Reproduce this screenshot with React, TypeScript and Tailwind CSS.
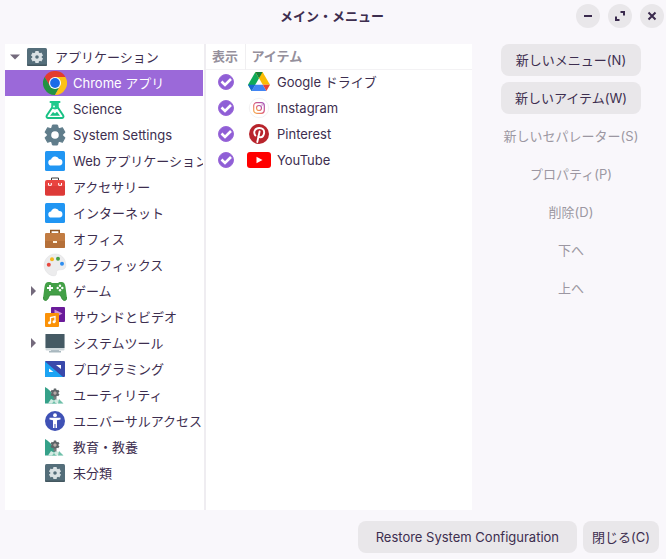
import * as React from "react";
import clsx from "clsx";

const svgProps = {
  width: 24,
  height: 24,
  viewBox: "0 0 24 24",
  className: "shrink-0",
  "aria-hidden": true,
} as const;

const GEAR_TEETH = [0, 60, 120, 180, 240, 300];

const BoxGearIcon = () => (
  <svg {...svgProps}>
    <rect x="2" y="3" width="20" height="18" rx="1.5" fill="#546e7a" />
    <path d="M2 19.500h20a1.500 1.500 0 0 1-1.500 1.500h-17A1.500 1.500 0 0 1 2 19.500z" fill="#43575f" />
    {GEAR_TEETH.map((angle) => (
      <rect
        key={angle}
        x="10.200"
        y="6"
        width="3.600"
        height="3.500"
        rx=".4"
        fill="#d9e1e4"
        transform={`rotate(${angle} 12 12)`}
      />
    ))}
    <circle cx="12" cy="12" r="3.300" fill="none" stroke="#d9e1e4" strokeWidth="3" />
  </svg>
);

const ChromeIcon = () => (
  <svg {...svgProps}>
    <path d="M12 6.500h10.700A12 12 0 0 0 1.600 6l5.300 9z" fill="#e33b2e" />
    <path d="M1.600 6A12 12 0 0 0 12 24l5-9-10 0z" fill="#229342" />
    <path d="M12 24A12 12 0 0 0 22.400 6H12l5 9z" fill="#fbc116" />
    <circle cx="12" cy="12" r="6" fill="#fff" />
    <circle cx="12" cy="12" r="4.900" fill="#1a6be8" />
  </svg>
);

const ScienceIcon = () => (
  <svg {...svgProps}>
    <path
      d="M9.500 6v4L3.800 18.500a1.700 1.700 0 0 0 1.500 2.600h13.400a1.700 1.700 0 0 0 1.500-2.600L14.500 10V6"
      fill="#fff"
      stroke="#18c184"
      strokeWidth="2"
      strokeLinejoin="round"
    />
    <path d="M7.500 5h9" stroke="#1fc98b" strokeWidth="2" strokeLinecap="round" />
    <path d="M8.500 5h7v6.500L12 12.500l-3.500-1z" fill="#22ca8d" />
    <path d="m7 18.800 3-3.800 2 1.500 2-1.800 3 4.100z" fill="#18c184" />
    <circle cx="11" cy="9.500" r=".9" fill="#fff" />
  </svg>
);

const SettingsIcon = () => (
  <svg {...svgProps}>
    {GEAR_TEETH.map((angle) => (
      <path
        key={angle}
        d="M9.500 2h5l1.300 5h-7.600z"
        fill="#607d8b"
        stroke="#607d8b"
        strokeLinejoin="round"
        transform={`rotate(${angle} 12 12)`}
      />
    ))}
    <circle cx="12" cy="12" r="7.500" fill="#607d8b" />
    <circle cx="12" cy="12" r="3.800" fill="#fff" />
  </svg>
);

const CloudIcon = () => (
  <svg {...svgProps}>
    <rect x="2" y="2" width="20" height="20" rx="1.500" fill="#2196f3" />
    <path d="M8.500 16.500a3 3 0 0 1-.4-6 4.200 4.200 0 0 1 7.900-.6 3.300 3.300 0 0 1 .3 6.600z" fill="#fff" />
  </svg>
);

const ToolboxIcon = () => (
  <svg {...svgProps}>
    <path d="M8.500 6V3h7v3" fill="none" stroke="#3c3c3c" strokeWidth="1" />
    <rect x="2" y="5" width="20" height="15.500" rx="2" fill="#e94440" />
    <path d="M2 11h20v8a1.500 1.500 0 0 1-1.500 1.500h-17A1.500 1.500 0 0 1 2 19z" fill="#dd3a38" />
    <path d="M5.500 8v2.300h2.800V8M15.700 8v2.300h2.800V8" fill="none" stroke="#fff" strokeWidth="1" />
  </svg>
);

const BriefcaseIcon = () => (
  <svg {...svgProps}>
    <path d="M7.800 7V3.500h8.400V7" fill="none" stroke="#8d5524" strokeWidth="1.600" />
    <rect x="2" y="6" width="20" height="15" rx="1.200" fill="#c27c42" />
    <path d="M2 14h20v5.800a1.200 1.200 0 0 1-1.200 1.200H3.200A1.200 1.200 0 0 1 2 19.800z" fill="#b57039" />
    <path d="M10 14h4v2h-4z" fill="#fff3df" />
  </svg>
);

const PaletteIcon = () => (
  <svg {...svgProps}>
    <path
      d="M12.500 1C6 1 1.200 6 1.200 12.200c0 6 4.600 10.600 9.800 10.600 3.500 0 1.800-3.300 3-5 1.600-2.200 8.800.8 8.800-5.500C22.800 5.500 18 1 12.500 1z"
      fill="#ececed"
      stroke="#dcdcde"
      strokeWidth=".5"
    />
    <circle cx="5.800" cy="11.800" r="2" fill="#e8483f" />
    <circle cx="9" cy="6.300" r="2" fill="#f3b51d" />
    <circle cx="15" cy="5.700" r="2" fill="#43a047" />
    <circle cx="19" cy="10.800" r="2" fill="#2e8ef0" />
  </svg>
);

const GamepadIcon = () => (
  <svg {...svgProps}>
    <path
      d="M5 3h2.500l1.500 1h6l1.500-1H19c2.300.3 3 2.300 3.500 5l1.300 10c.3 3-1.500 4-3.300 3.200-1.800-.8-2.200-4-3.500-5.200H7c-1.300 1.200-1.700 4.400-3.500 5.200C1.700 22 0 21 .2 18L1.500 8C2 5.300 2.700 3.300 5 3z"
      fill="#43a047"
    />
    <path d="M.5 18c-.2 3 1.300 4 3 3.200C5.300 20.400 5.700 17.200 7 16h10c1.300 1.200 1.700 4.400 3.500 5.200 1.700.8 3.200-.2 3-3.200" fill="none" stroke="#388e3c" />
    <path d="M7 6v6M4 9h6" stroke="#fff" strokeWidth="1.800" />
    <circle cx="17" cy="6.700" r="1.200" fill="#fff" />
    <circle cx="17" cy="11.300" r="1.200" fill="#fff" />
    <circle cx="14.700" cy="9" r="1.200" fill="#fff" />
    <circle cx="19.300" cy="9" r="1.200" fill="#fff" />
  </svg>
);

const MultimediaIcon = () => (
  <svg {...svgProps}>
    <rect x="8" y="2" width="14" height="15" rx="1" fill="#6a1b9a" />
    <path d="m11.500 4.500 8 4-8 4.500z" fill="#ce93d8" />
    <rect x="2" y="8" width="14" height="14" rx="1" fill="#fb9207" />
    <path d="M7.500 18v-5.500l4.500-1V17" fill="none" stroke="#fff" strokeWidth="1.300" />
    <circle cx="6.500" cy="17.800" r="1.500" fill="#fff" />
    <circle cx="11" cy="16.800" r="1.500" fill="#fff" />
  </svg>
);

const MonitorIcon = () => (
  <svg {...svgProps}>
    <path d="M8 17h8v3H8z" fill="#90a4ae" />
    <path d="M6 20h12v1.500H6z" fill="#a9b8bf" />
    <rect x="2.500" y="3" width="19" height="16.500" rx="1" fill="#cfd8dc" />
    <path d="M2.500 3h19v14h-19z" fill="#455a64" />
  </svg>
);

const DevelopmentIcon = () => (
  <svg {...svgProps}>
    <rect x="2" y="4" width="20" height="16" rx="1" fill="#3949ab" />
    <path d="M2 4.500 20 20H3a1 1 0 0 1-1-1z" fill="#1ca4f4" />
    <path d="M6 11.500V15h4.500z" fill="#fff" />
    <path d="M13 8h5v4z" fill="#fff" />
  </svg>
);

const UtilityIcon = () => (
  <svg {...svgProps}>
    <path d="M2 4c3 1.500 6.500 4.500 9 9l3 7.500H2z" fill="#35a189" />
    <path d="M5 20.500 8 16l3 1.500 2.500-1.500 3 1.500 4 3z" fill="#d3eae2" />
    <path d="m9 20.500 2-2.500 2 2.500zM16 16l4.500 4.500H15z" fill="#6fc0a9" />
    {GEAR_TEETH.map((angle) => (
      <rect
        key={angle}
        x="10.800"
        y="5.500"
        width="2.400"
        height="3"
        fill="#5f6568"
        transform={`rotate(${angle} 12 10)`}
      />
    ))}
    <circle cx="12" cy="10" r="2.500" fill="none" stroke="#5f6568" strokeWidth="2" />
    <circle cx="12" cy="10" r="1.500" fill="#b9a9a6" />
    <path d="M10.500 13.500h3v3h-3z" fill="#777d7f" />
  </svg>
);

const AccessibilityIcon = () => (
  <svg {...svgProps}>
    <circle cx="12" cy="12" r="10" fill="#3f51b5" />
    <circle cx="12" cy="6.200" r="1.900" fill="#fff" />
    <path d="M6.500 8.800h11v1.800l-3.500.6V19h-1.500v-4h-1v4H10v-7.800l-3.500-.6z" fill="#fff" />
  </svg>
);

const DriveIcon = () => (
  <svg {...svgProps}>
    <path d="m8.400 2 3.600 6.300L4.600 21 1 14.800z" fill="#0faa58" />
    <path d="M15.600 2 23 14.800h-7.200L8.400 2z" fill="#fbbc04" />
    <path d="M8.400 2h7.200L12 8.300z" fill="#188038" />
    <path d="M1 14.800h7.200L4.600 21z" fill="#1967d2" />
    <path d="M8.200 14.800h7.600L19.400 21H4.600z" fill="#4285f4" />
    <path d="M15.800 14.800H23L19.400 21z" fill="#ea4335" />
  </svg>
);

const InstagramIcon = () => (
  <svg {...svgProps}>
    <defs>
      <linearGradient id="insta" x1="0" y1="1" x2="1" y2="0">
        <stop offset="0" stopColor="#f9b54a" />
        <stop offset=".5" stopColor="#dd5a78" />
        <stop offset="1" stopColor="#9c50bd" />
      </linearGradient>
    </defs>
    <circle cx="12" cy="12" r="9.700" fill="#fff" stroke="#efeeef" strokeWidth=".8" />
    <rect x="6.700" y="6.700" width="10.600" height="10.600" rx="3" fill="none" stroke="url(#insta)" strokeWidth="1.200" />
    <circle cx="12" cy="12" r="2.500" fill="none" stroke="url(#insta)" strokeWidth="1.200" />
    <circle cx="15.100" cy="8.900" r=".6" fill="#b03fa0" />
  </svg>
);

const PinterestIcon = () => (
  <svg {...svgProps}>
    <circle cx="12" cy="12" r="10" fill="#b8242c" />
    <path
      d="M8.300 13.500C5.800 9.800 8.300 6 12.300 6c3.500 0 5.200 2.300 4.800 5-.4 2.900-2.200 4.400-3.900 4.300-1.300-.1-1.900-1-1.900-1M12.600 9.500 10.300 20"
      fill="none"
      stroke="#fff"
      strokeWidth="1.900"
      strokeLinecap="round"
    />
  </svg>
);

const YoutubeIcon = () => (
  <svg {...svgProps}>
    <rect x="0" y="4" width="24" height="16" rx="3" fill="#f00" />
    <path d="m9.500 8.700 6 3.300-6 3.300z" fill="#fff" />
  </svg>
);

interface Category {
  name: string;
  icon: React.ComponentType;
  expandable?: boolean;
  selected?: boolean;
}

const categories: Category[] = [
  { name: "Chrome アプリ", icon: ChromeIcon, selected: true },
  { name: "Science", icon: ScienceIcon },
  { name: "System Settings", icon: SettingsIcon },
  { name: "Web アプリケーション", icon: CloudIcon },
  { name: "アクセサリー", icon: ToolboxIcon },
  { name: "インターネット", icon: CloudIcon },
  { name: "オフィス", icon: BriefcaseIcon },
  { name: "グラフィックス", icon: PaletteIcon },
  { name: "ゲーム", icon: GamepadIcon, expandable: true },
  { name: "サウンドとビデオ", icon: MultimediaIcon },
  { name: "システムツール", icon: MonitorIcon, expandable: true },
  { name: "プログラミング", icon: DevelopmentIcon },
  { name: "ユーティリティ", icon: UtilityIcon },
  { name: "ユニバーサルアクセス", icon: AccessibilityIcon },
  { name: "教育・教養", icon: UtilityIcon },
  { name: "未分類", icon: BoxGearIcon },
];

const items = [
  { id: "drive", name: "Google ドライブ", icon: DriveIcon },
  { id: "instagram", name: "Instagram", icon: InstagramIcon },
  { id: "pinterest", name: "Pinterest", icon: PinterestIcon },
  { id: "youtube", name: "YouTube", icon: YoutubeIcon },
];

const actions = [
  { label: "新しいメニュー(N)", enabled: true },
  { label: "新しいアイテム(W)", enabled: true },
  { label: "新しいセパレーター(S)", enabled: false },
  { label: "プロパティ(P)", enabled: false },
  { label: "削除(D)", enabled: false },
  { label: "下へ", enabled: false },
  { label: "上へ", enabled: false },
];

const WindowButton = ({
  label,
  children,
}: {
  label: string;
  children: React.ReactNode;
}) => (
  <button
    type="button"
    aria-label={label}
    className="flex size-6 items-center justify-center rounded-full bg-[#e9e7ea]"
  >
    <svg
      width="12"
      height="12"
      viewBox="0 0 12 12"
      fill="none"
      stroke="#3a2a4d"
      strokeWidth="2"
    >
      {children}
    </svg>
  </button>
);

const TitleBar = () => (
  <header className="grid h-8 grid-cols-[1fr_auto_1fr] items-center pr-0.5">
    <h1 className="col-start-2 font-bold">メイン・メニュー</h1>
    <div className="flex justify-end gap-2">
      <WindowButton label="最小化">
        <path d="M2 6h8" />
      </WindowButton>
      <WindowButton label="最大化">
        <path d="M6.500 2H10v3.500M2 6.500V10h3.500" />
      </WindowButton>
      <WindowButton label="閉じる">
        <path d="m2.500 2.500 7 7M9.500 2.500l-7 7" />
      </WindowButton>
    </div>
  </header>
);

const Expander = ({ open }: { open?: boolean }) => (
  <svg width="10" height="12" viewBox="0 0 10 12" fill="#746a7c">
    <path d={open ? "M0 3.500h10L5 8.500z" : "M3 1v10l5-5z"} />
  </svg>
);

const CategoryTree = () => (
  <nav className="w-[198px] shrink-0 overflow-hidden bg-white">
    <ul>
      <li>
        <button type="button" className="flex h-[26px] w-full items-center">
          <span className="flex w-5 justify-center">
            <Expander open />
          </span>
          <BoxGearIcon />
          <span className="pl-1.5 whitespace-nowrap">アプリケーション</span>
        </button>
        <ul>
          {categories.map(({ name, icon: Icon, expandable, selected }) => (
            <li key={name}>
              <button
                type="button"
                aria-current={selected}
                className={clsx(
                  "flex h-[26px] w-full items-center pl-[18px]",
                  selected && "bg-[#9b69d9] text-white"
                )}
              >
                <span className="flex w-5 shrink-0 justify-center">
                  {expandable && <Expander />}
                </span>
                <Icon />
                <span className="pl-1.5 whitespace-nowrap">{name}</span>
              </button>
            </li>
          ))}
        </ul>
      </li>
    </ul>
  </nav>
);

const ItemTable = () => (
  <div className="min-w-0 flex-1 bg-white">
    <table className="w-full table-fixed">
      <thead className="text-left text-[#95909c]">
        <tr className="h-[25px] border-b border-[#f3f2f4]">
          <th className="w-[39px] border-r border-[#f0eff1] pl-1.5 font-bold whitespace-nowrap">表示</th>
          <th className="pl-1.5 font-bold">アイテム</th>
        </tr>
      </thead>
      <tbody>
        {items.map(({ id, name, icon: Icon }) => (
          <tr key={id} className="h-[26px]">
            <td>
              <span className="relative mx-auto block size-4">
                <input
                  id={id}
                  type="checkbox"
                  defaultChecked
                  className="peer block size-4 appearance-none rounded-full border border-[#9b69d9] checked:bg-[#8f5fd6]"
                />
                <svg
                  viewBox="0 0 16 16"
                  className="pointer-events-none absolute inset-0 hidden peer-checked:block"
                  fill="none"
                  stroke="#fff"
                  strokeWidth="2.600"
                >
                  <path d="m3.500 7.500 3.500 3.500 6-6" />
                </svg>
              </span>
            </td>
            <td>
              <label htmlFor={id} className="flex items-center gap-1.5 pl-0.5">
                <Icon />
                {name}
              </label>
            </td>
          </tr>
        ))}
      </tbody>
    </table>
  </div>
);

const PushButton = ({
  className,
  ...props
}: React.ComponentProps<"button">) => (
  <button
    type="button"
    className={clsx(
      "h-8 rounded-lg whitespace-nowrap enabled:bg-[#e9e7ea] disabled:text-[#9c97a2]",
      className
    )}
    {...props}
  />
);

export default function App() {
  return (
    <div className="flex min-h-screen flex-col bg-[#f9f7fb] font-[Inter,'Noto_Sans_CJK_JP',sans-serif] text-[13px] leading-5 text-[#3d2e4f]">
      <TitleBar />
      <main className="flex flex-1 pt-3 pr-[25px] pl-[5px]">
        <CategoryTree />
        <div className="w-[3px] border-l border-white bg-[#efedf1]" />
        <ItemTable />
        <div className="ml-[29px] flex w-[140px] shrink-0 flex-col gap-1.5">
          {actions.map(({ label, enabled }) => (
            <PushButton key={label} disabled={!enabled}>
              {label}
            </PushButton>
          ))}
        </div>
      </main>
      <footer className="flex justify-end gap-1.5 pt-[11px] pr-[7px] pb-1.5">
        <PushButton className="px-[18px]">Restore System Configuration</PushButton>
        <PushButton className="px-[9px]">閉じる(C)</PushButton>
      </footer>
    </div>
  );
}
